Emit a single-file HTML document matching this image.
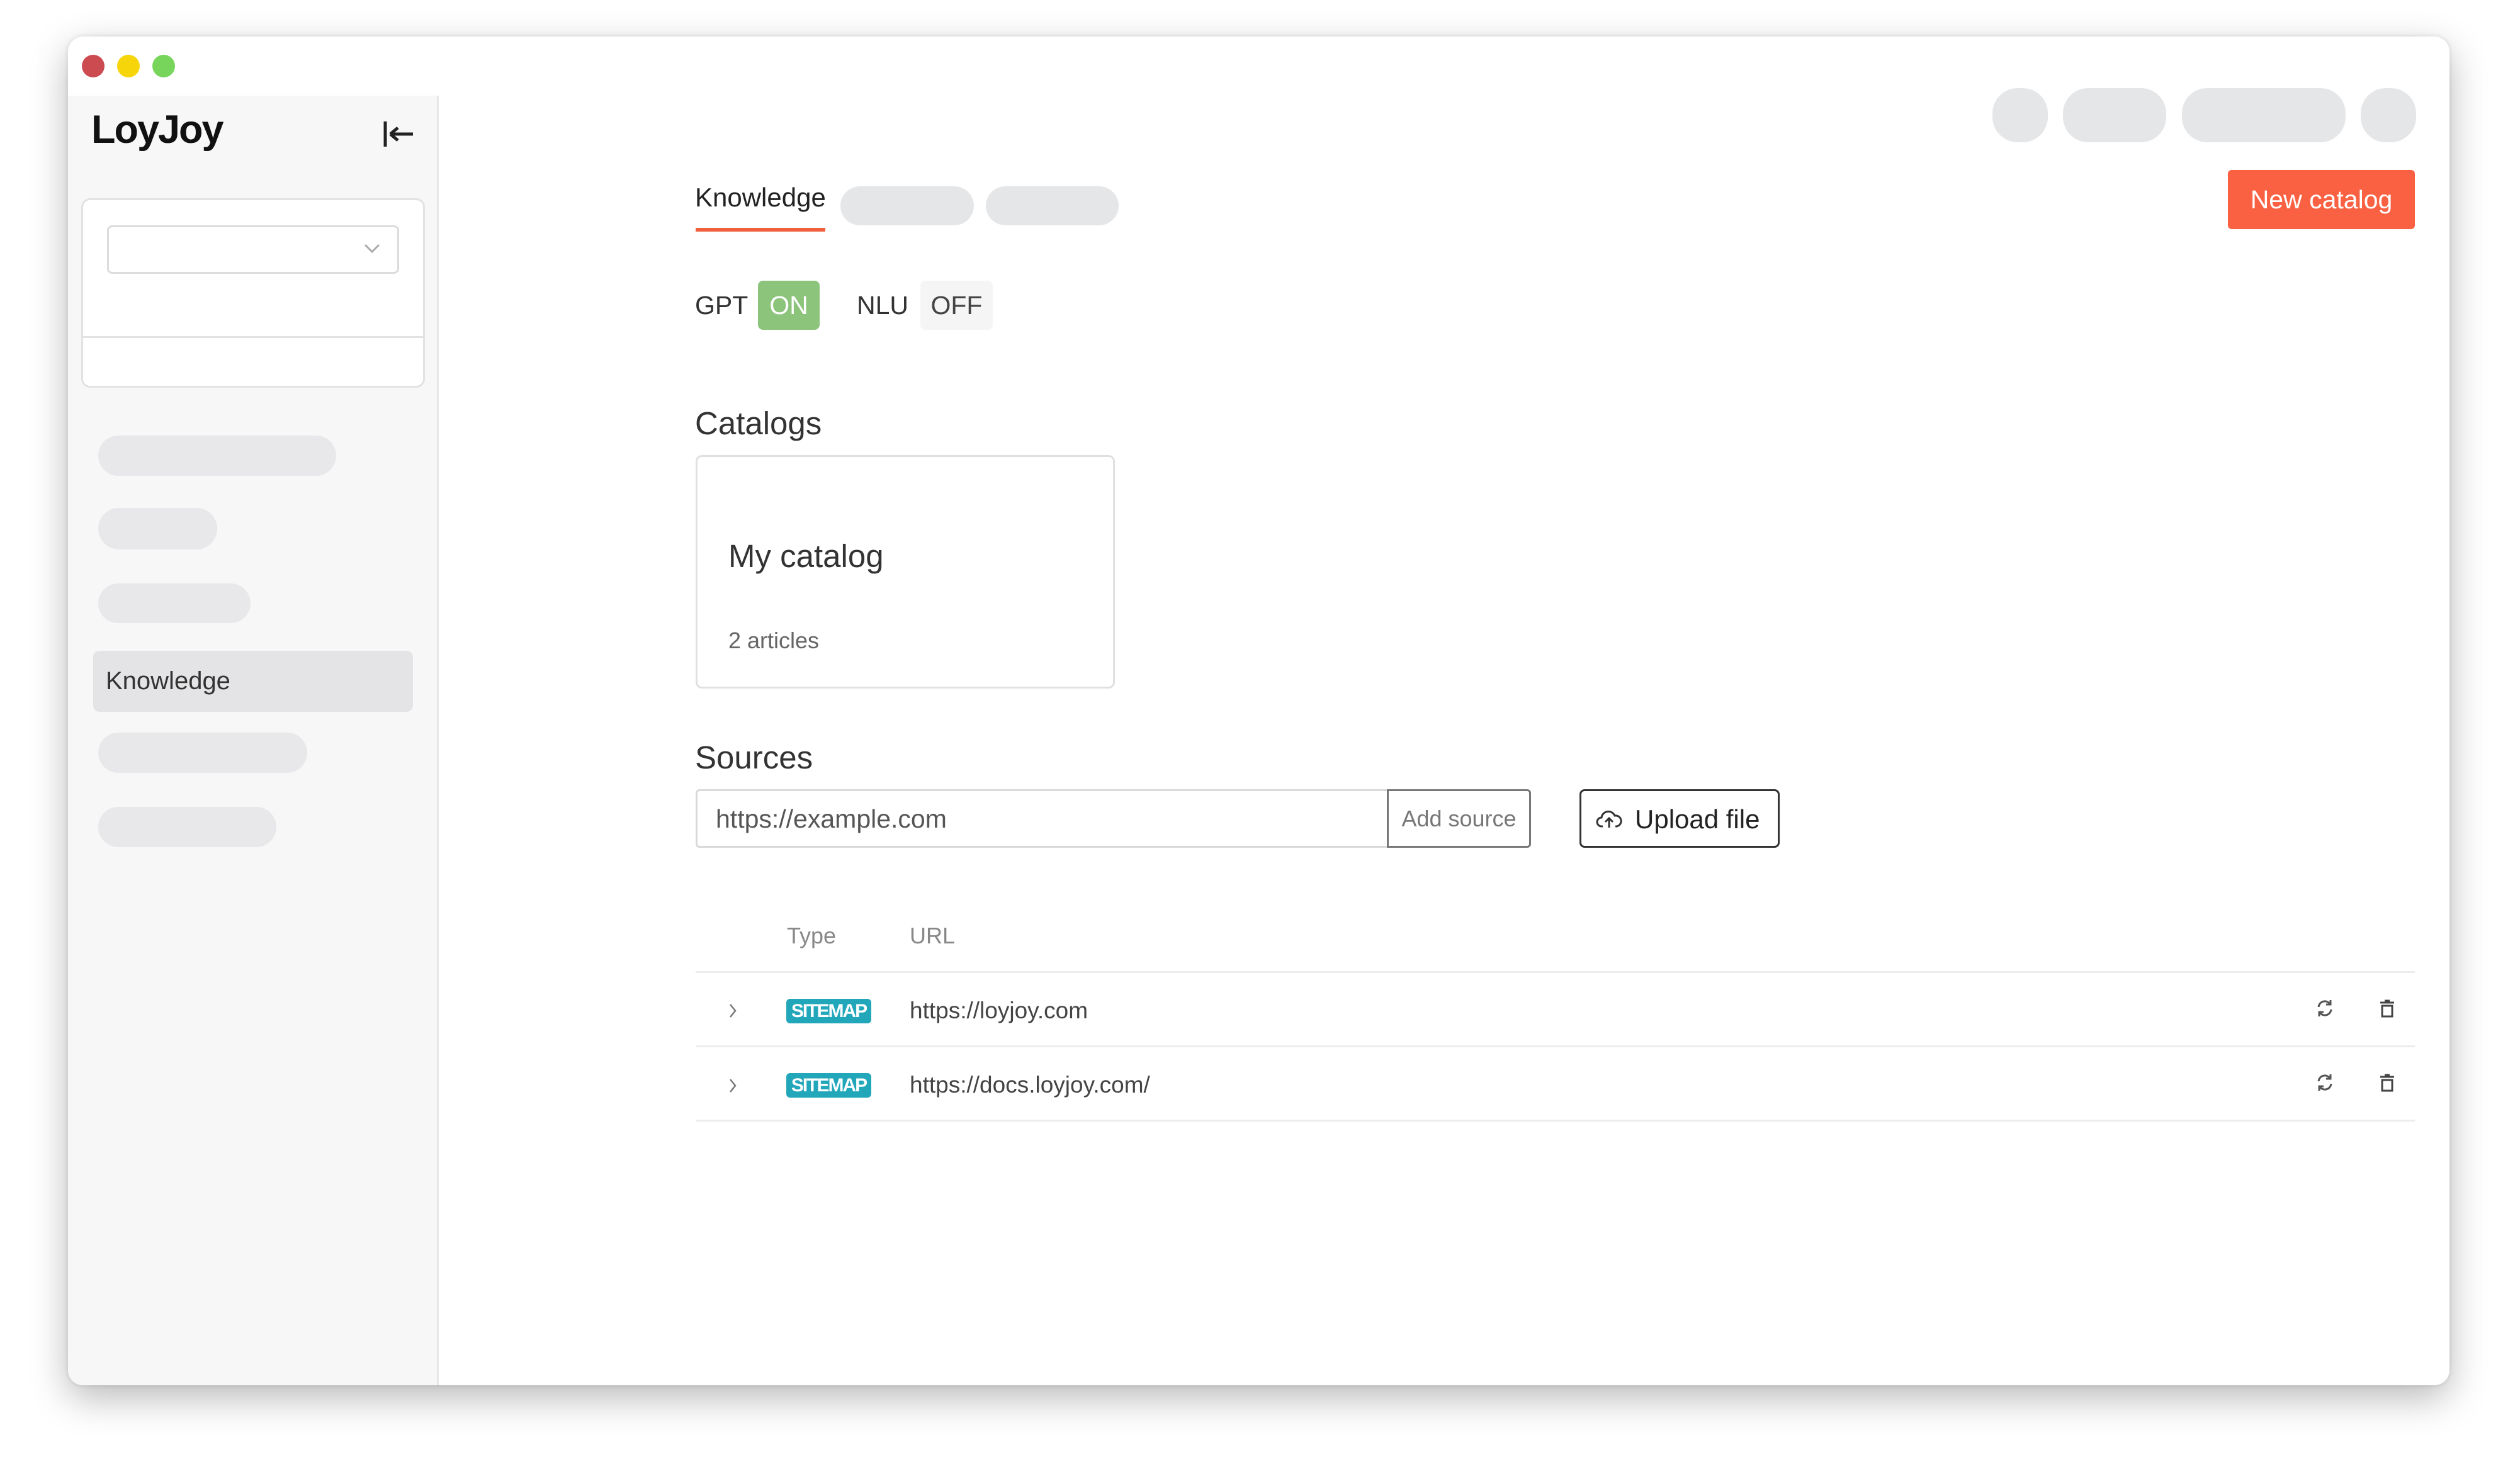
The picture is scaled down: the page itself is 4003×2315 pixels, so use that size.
<!DOCTYPE html>
<html><head><meta charset="utf-8"><style>
*{margin:0;padding:0;box-sizing:border-box}
body{width:4003px;height:2315px;background:#fff;position:relative;overflow:hidden;font-family:"Liberation Sans",Arial,sans-serif;color:#333}
.a{position:absolute}
.win{left:108px;top:58px;width:3783px;height:2143px;border-radius:24px;background:#fff;box-shadow:0 20px 60px rgba(0,0,0,.28),0 0 8px rgba(0,0,0,.12);overflow:hidden}
.dot{width:36px;height:36px;border-radius:50%;top:87px}
.pill{background:#e5e6e8;border-radius:40px}
.sk{background:#e8e8ea;border-radius:40px}
.line{height:3px;background:#ececec;left:1105px;width:2731px}
.badge{background:#21a6ba;color:#fff;font-weight:bold;font-size:30px;border-radius:6px;width:135px;height:39px;line-height:39px;text-align:center;letter-spacing:-2px}
</style></head><body>
<div class="a win"></div>
<div class="a dot" style="left:130px;background:#cc4b50"></div>
<div class="a dot" style="left:186px;background:#f6d50b"></div>
<div class="a dot" style="left:242px;background:#76d55a"></div>
<!-- sidebar -->
<div class="a" style="left:108px;top:152px;width:589px;height:2049px;background:#f7f7f8;border-right:3px solid #e6e6e8;border-bottom-left-radius:24px"></div>
<div class="a" style="left:145px;top:170px;font-size:63px;font-weight:bold;color:#111;letter-spacing:-2px">LoyJoy</div>
<svg class="a" style="left:606px;top:190px" width="54" height="46" viewBox="0 0 54 46"><path d="M6 3v40M14 23h36M14 23l12-10M14 23l12 10" stroke="#222" stroke-width="5" fill="none"/></svg>
<div class="a" style="left:129px;top:315px;width:546px;height:301px;background:#fff;border:3px solid #e2e2e4;border-radius:14px"></div>
<div class="a" style="left:129px;top:534px;width:546px;height:3px;background:#e2e2e4"></div>
<div class="a" style="left:170px;top:358px;width:464px;height:77px;border:3px solid #dcdcde;border-radius:8px;background:#fff"></div>
<svg class="a" style="left:578px;top:386px" width="26" height="18"><path d="M2 3l11 11 11-11" stroke="#aaa" stroke-width="3" fill="none"/></svg>
<div class="a sk" style="left:156px;top:692px;width:378px;height:64px"></div>
<div class="a sk" style="left:156px;top:807px;width:189px;height:66px"></div>
<div class="a sk" style="left:156px;top:927px;width:242px;height:63px"></div>
<div class="a" style="left:148px;top:1034px;width:508px;height:97px;background:#e4e4e6;border-radius:10px"></div>
<div class="a" style="left:168px;top:1060px;font-size:40px;color:#333">Knowledge</div>
<div class="a sk" style="left:156px;top:1164px;width:332px;height:64px"></div>
<div class="a sk" style="left:156px;top:1282px;width:283px;height:64px"></div>
<!-- top right -->
<div class="a pill" style="left:3165px;top:140px;width:88px;height:86px"></div>
<div class="a pill" style="left:3277px;top:140px;width:164px;height:86px"></div>
<div class="a pill" style="left:3466px;top:140px;width:260px;height:86px"></div>
<div class="a pill" style="left:3750px;top:140px;width:88px;height:86px"></div>
<div class="a" style="left:3539px;top:270px;width:297px;height:94px;background:#fa6142;border-radius:6px;color:#fff;font-size:41px;line-height:94px;text-align:center">New catalog</div>
<!-- tabs -->
<div class="a" style="left:1104px;top:290px;font-size:42px;color:#222">Knowledge</div>
<div class="a" style="left:1105px;top:362px;width:206px;height:6px;background:#f0603c"></div>
<div class="a pill" style="left:1335px;top:296px;width:212px;height:62px"></div>
<div class="a pill" style="left:1566px;top:296px;width:211px;height:62px"></div>
<div class="a" style="left:1104px;top:462px;font-size:41px;color:#333">GPT</div>
<div class="a" style="left:1204px;top:446px;width:98px;height:78px;background:#8bc47a;border-radius:8px;color:#fff;font-size:41px;line-height:78px;text-align:center">ON</div>
<div class="a" style="left:1361px;top:462px;font-size:41px;color:#333">NLU</div>
<div class="a" style="left:1462px;top:446px;width:115px;height:78px;background:#f5f5f6;border-radius:8px;color:#444;font-size:41px;line-height:78px;text-align:center">OFF</div>
<!-- catalogs -->
<div class="a" style="left:1104px;top:643px;font-size:51px;color:#333">Catalogs</div>
<div class="a" style="left:1105px;top:723px;width:666px;height:371px;border:3px solid #e0e0e2;border-radius:10px"></div>
<div class="a" style="left:1157px;top:854px;font-size:51px;color:#333">My catalog</div>
<div class="a" style="left:1157px;top:997px;font-size:36px;color:#666">2 articles</div>
<!-- sources -->
<div class="a" style="left:1104px;top:1174px;font-size:51px;color:#333">Sources</div>
<div class="a" style="left:1105px;top:1254px;width:1327px;height:93px;border:3px solid #d9d9db;border-radius:6px"></div>
<div class="a" style="left:2203px;top:1254px;width:229px;height:93px;border:3px solid #777;border-radius:0 6px 6px 0;color:#777;font-size:36px;line-height:87px;text-align:center">Add source</div>
<div class="a" style="left:1137px;top:1278px;font-size:41px;color:#555">https://example.com</div>
<div class="a" style="left:2509px;top:1254px;width:318px;height:93px;border:3px solid #333;border-radius:8px"></div>
<svg class="a" style="left:2535px;top:1283px" width="42" height="36" viewBox="0 0 42 36"><path d="M11 30H9a7 7 0 0 1 0-14 11 11 0 0 1 21-3 8.5 8.5 0 0 1 3 17h-2" stroke="#333" stroke-width="3" fill="none"/><path d="M21 32V18M15 23l6-6 6 6" stroke="#333" stroke-width="3" fill="none"/></svg>
<div class="a" style="left:2597px;top:1278px;font-size:42px;color:#222">Upload file</div>
<!-- table -->
<div class="a" style="left:1250px;top:1466px;font-size:36px;color:#888">Type</div>
<div class="a" style="left:1445px;top:1466px;font-size:36px;color:#888">URL</div>
<div class="a line" style="top:1543px"></div>
<div class="a line" style="top:1661px"></div>
<div class="a line" style="top:1779px"></div>
<svg class="a" style="left:1155px;top:1592px" width="18" height="28"><path d="M5 4l8 10-8 10" stroke="#777" stroke-width="2.5" fill="none"/></svg>
<svg class="a" style="left:1155px;top:1711px" width="18" height="28"><path d="M5 4l8 10-8 10" stroke="#777" stroke-width="2.5" fill="none"/></svg>
<div class="a badge" style="left:1249px;top:1587px">SITEMAP</div>
<div class="a badge" style="left:1249px;top:1705px">SITEMAP</div>
<div class="a" style="left:1445px;top:1585px;font-size:37px;color:#444">https://loyjoy.com</div>
<div class="a" style="left:1445px;top:1703px;font-size:37px;color:#444">https://docs.loyjoy.com/</div>
<svg class="a" style="left:3677px;top:1586px" width="32" height="32" viewBox="0 0 32 32"><path d="M6 14a10 10 0 0 1 18-5M26 18a10 10 0 0 1-18 5" stroke="#555" stroke-width="3" fill="none"/><path d="M25 3v7h-7M7 29v-7h7" stroke="#555" stroke-width="3" fill="none"/></svg>
<svg class="a" style="left:3677px;top:1704px" width="32" height="32" viewBox="0 0 32 32"><path d="M6 14a10 10 0 0 1 18-5M26 18a10 10 0 0 1-18 5" stroke="#555" stroke-width="3" fill="none"/><path d="M25 3v7h-7M7 29v-7h7" stroke="#555" stroke-width="3" fill="none"/></svg>
<svg class="a" style="left:3778px;top:1588px" width="28" height="30" viewBox="0 0 28 30"><path d="M3 5h22M10 2h8M6 10h16v17H6z" stroke="#444" stroke-width="3" fill="none"/></svg>
<svg class="a" style="left:3778px;top:1706px" width="28" height="30" viewBox="0 0 28 30"><path d="M3 5h22M10 2h8M6 10h16v17H6z" stroke="#444" stroke-width="3" fill="none"/></svg>
</body></html>
